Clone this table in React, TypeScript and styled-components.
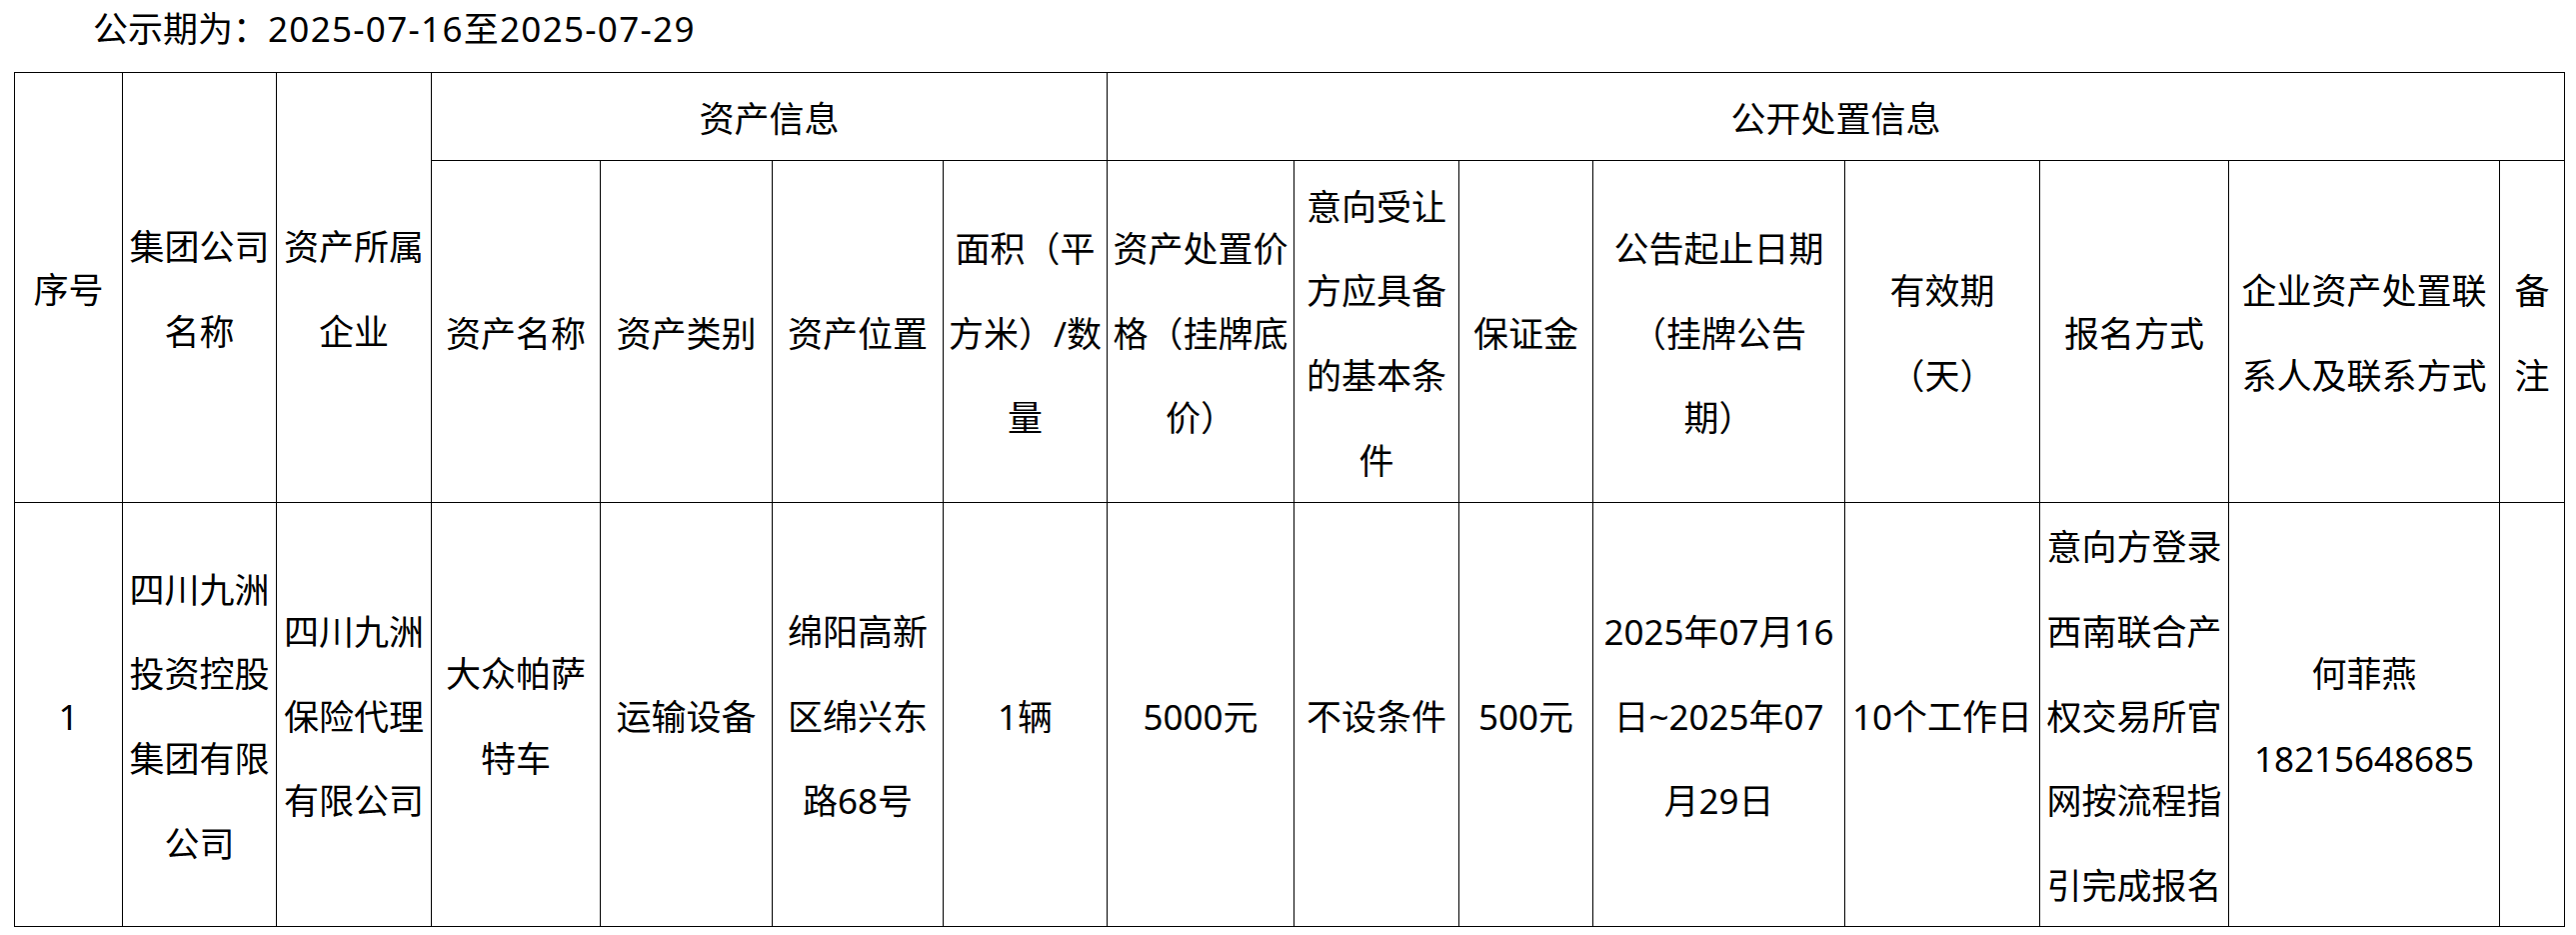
import React from 'react';
import styled, { createGlobalStyle } from 'styled-components';

const GlobalStyle = createGlobalStyle`
  html, body {
    margin: 0;
    padding: 0;
    background: #ffffff;
  }
  body {
    font-family: "Noto Sans", "Noto Sans CJK SC", sans-serif;
    color: #000000;
  }
`;

const Page = styled.div`
  width: 2577px;
  min-height: 935px;
  box-sizing: border-box;
  background: #ffffff;
`;

const Title = styled.div`
  font-size: 35px;
  line-height: 58px;
  height: 72px;
  padding-left: 93px;
  box-sizing: border-box;
  white-space: nowrap;
  text-spacing-trim: space-all;
`;

const DateRange = styled.span`
  letter-spacing: 1.3px;
`;

const Grid = styled.div`
  display: grid;
  grid-template-columns: 107px 153px 154px 168px 171px 170px 163px 186px 164px 133px 251px 194px 188px 270px 64px;
  grid-template-rows: 87px 341px 423px;
  gap: 1px;
  width: max-content;
  margin-left: 14px;
  background: #000000;
  border: 1px solid #000000;
`;

const Cell = styled.div<{ $cols?: number; $rows?: number }>`
  grid-column: ${(p) => (p.$cols ? `span ${p.$cols}` : 'auto')};
  grid-row: ${(p) => (p.$rows ? `span ${p.$rows}` : 'auto')};
  background: #ffffff;
  display: flex;
  align-items: center;
  justify-content: center;
  box-sizing: border-box;
  padding: 5px 3px 0;
  text-align: center;
  font-size: 35px;
  line-height: 84.7px;
  text-spacing-trim: space-all;
  overflow: visible;
`;

const Text = styled.span`
  display: block;
  white-space: nowrap;
`;

type CellData = { lines: string[]; cols?: number; rows?: number };

const cells: CellData[] = [
  { lines: ['序号'], rows: 2 },
  { lines: ['集团公司', '名称'], rows: 2 },
  { lines: ['资产所属', '企业'], rows: 2 },
  { lines: ['资产信息'], cols: 4 },
  { lines: ['公开处置信息'], cols: 8 },
  { lines: ['资产名称'] },
  { lines: ['资产类别'] },
  { lines: ['资产位置'] },
  { lines: ['面积（平', '方米）/数', '量'] },
  { lines: ['资产处置价', '格（挂牌底', '价）'] },
  { lines: ['意向受让', '方应具备', '的基本条', '件'] },
  { lines: ['保证金'] },
  { lines: ['公告起止日期', '（挂牌公告', '期）'] },
  { lines: ['有效期', '（天）'] },
  { lines: ['报名方式'] },
  { lines: ['企业资产处置联', '系人及联系方式'] },
  { lines: ['备', '注'] },
  { lines: ['1'] },
  { lines: ['四川九洲', '投资控股', '集团有限', '公司'] },
  { lines: ['四川九洲', '保险代理', '有限公司'] },
  { lines: ['大众帕萨', '特车'] },
  { lines: ['运输设备'] },
  { lines: ['绵阳高新', '区绵兴东', '路68号'] },
  { lines: ['1辆'] },
  { lines: ['5000元'] },
  { lines: ['不设条件'] },
  { lines: ['500元'] },
  { lines: ['2025年07月16', '日~2025年07', '月29日'] },
  { lines: ['10个工作日'] },
  { lines: ['意向方登录', '西南联合产', '权交易所官', '网按流程指', '引完成报名'] },
  { lines: ['何菲燕', '18215648685'] },
  { lines: [] },
];

export default function App() {
  return (
    <Page>
      <GlobalStyle />
      <Title>
        公示期为：<DateRange>2025-07-16至2025-07-29</DateRange>
      </Title>
      <Grid>
        {cells.map((c, i) => (
          <Cell key={i} $cols={c.cols} $rows={c.rows}>
            <Text>
              {c.lines.map((l, j) => (
                <React.Fragment key={j}>
                  {j > 0 && <br />}
                  {l}
                </React.Fragment>
              ))}
            </Text>
          </Cell>
        ))}
      </Grid>
    </Page>
  );
}
